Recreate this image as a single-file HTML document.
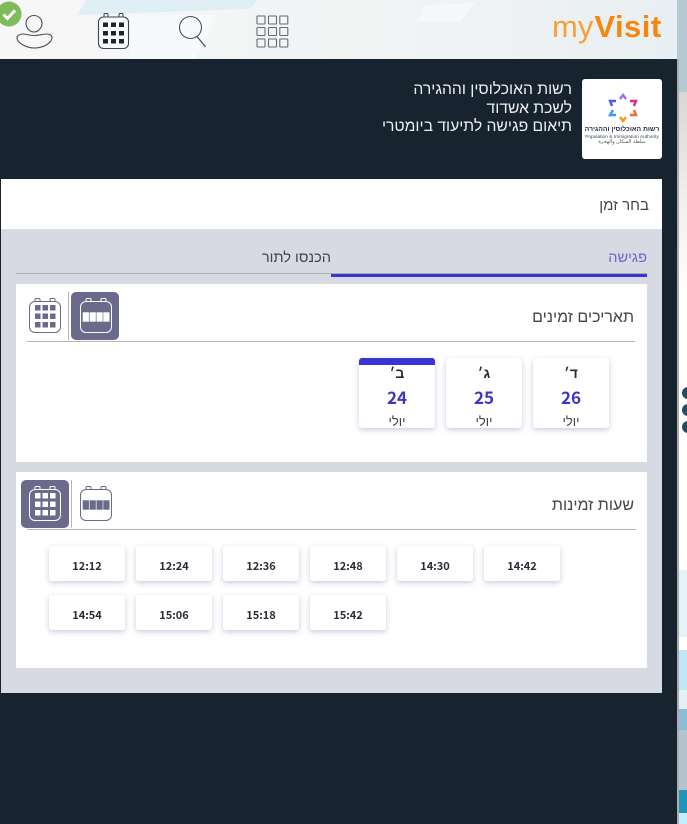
<!DOCTYPE html>
<html lang="he"><head><meta charset="utf-8"><title>myVisit</title>
<style>
html,body{margin:0;padding:0;width:687px;height:824px;overflow:hidden;background:#fff}
body{position:relative;font-family:"Liberation Sans","Noto Sans CJK SC",sans-serif}
.a{position:absolute}
.t{position:absolute;direction:rtl;white-space:nowrap;text-align:right}
.card{position:absolute;background:#fff}
.d{position:absolute;top:358px;width:76px;height:70px;background:#fff;border-radius:3px;box-shadow:0 2px 6px rgba(70,70,140,.28);text-align:center;direction:rtl;overflow:hidden}
.d b{position:absolute;left:0;right:0;top:6px;font-size:14px;line-height:18px;color:#2b2b35}
.d i{position:absolute;left:0;right:0;top:29px;font:bold 17px/20px "Noto Sans CJK SC","Liberation Sans",sans-serif;color:#3d35c9}
.d span{position:absolute;left:0;right:0;top:56px;font-size:13px;line-height:15px;color:#444}
.h{position:absolute;width:76px;height:35px;background:#fff;border-radius:3px;box-shadow:0 2px 6px rgba(70,70,140,.28);text-align:center;font:bold 11px/41px "Noto Sans CJK SC","Liberation Sans",sans-serif;color:#2a2d38}
</style></head>
<body>
<!-- right strip -->
<div class="a" style="left:677px;top:0;width:10px;height:824px;background:linear-gradient(#d8d6d6 92px,#f0f0f0 200px,#fff 300px)"></div>
<div class="a" style="left:677px;top:0;width:10px;height:92px;background:#b5cad3"></div>
<div class="a" style="left:677px;top:570px;width:10px;height:67px;background:#e4f4f8"></div>
<div class="a" style="left:677px;top:650px;width:10px;height:40px;background:#bfe8f4"></div>
<div class="a" style="left:677px;top:690px;width:10px;height:19px;background:#e3f0f6"></div>
<div class="a" style="left:677px;top:709px;width:10px;height:21px;background:#8bbcd6"></div>
<div class="a" style="left:677px;top:730px;width:10px;height:60px;background:#b3c3d0"></div>
<div class="a" style="left:677px;top:790px;width:10px;height:23px;background:#2196bd"></div>
<div class="a" style="left:677px;top:813px;width:10px;height:11px;background:#c0f0fa"></div>
<div class="a" style="left:682px;top:387px;width:12px;height:12px;border-radius:50%;background:#264a5e"></div>
<div class="a" style="left:682px;top:404px;width:12px;height:12px;border-radius:50%;background:#264a5e"></div>
<div class="a" style="left:682px;top:421px;width:12px;height:12px;border-radius:50%;background:#264a5e"></div>

<!-- dark main -->
<div class="a" style="left:0;top:59px;width:677px;height:765px;background:#182330"></div>
<div class="a" style="left:677px;top:59px;width:2px;height:765px;background:#adadad"></div>

<!-- header -->
<div class="a" style="left:0;top:0;width:677px;height:59px;background:linear-gradient(90deg,#f7f7f7,#f1f3f4 60%,#e8eff2)"></div>
<svg class="a" style="left:0;top:0" width="677" height="59" viewBox="0 0 677 59">
<polygon points="86,0 258,0 250,9 77,15" fill="#e0eff6"/>
<polygon points="130,15 218,15 195,59 130,59" fill="#f7fafb"/>
<polygon points="425,5 475,3 460,22 418,22" fill="#f5f7f8"/>
<!-- check -->
<circle cx="9" cy="14" r="12.5" fill="#80bb5b"/>
<path d="M3.500 14.500l4 4 7.500-8" fill="none" stroke="#fff" stroke-width="3"/>
<!-- person -->
<path d="M34 15.500c4.500 0 8 3.500 8 7.500 0 4-3 9-8 9s-8-5-8-9c0-4 3.500-7.500 8-7.500z" fill="none" stroke="#4a4f55" stroke-width="1.100"/>
<path d="M23 34c3 0 6 1.500 11 1.500s9-1.500 13-1.500c3 0 5 1.500 5 3.500 0 5-8 10.500-17.500 10.500S17 42 17 38c0-2.500 3-4 6-4z" fill="none" stroke="#4a4f55" stroke-width="1.100"/>
<!-- calendar -->
<path d="M104 17v-2.500q0-1 1-1h2q1 0 1 1v2.500M119 17v-2.500q0-1 1-1h2q1 0 1 1v2.500" fill="none" stroke="#3a444e" stroke-width="1"/>
<rect x="98.500" y="17" width="30" height="31.500" rx="5" fill="#fbfcfc" stroke="#3a444e" stroke-width="1.100"/>
<g fill="#1a2530">
<rect x="103" y="22.500" width="5" height="4.500"/><rect x="111" y="22.500" width="5" height="4.500"/><rect x="119" y="22.500" width="5" height="4.500"/>
<rect x="103" y="31" width="5" height="4.500"/><rect x="111" y="31" width="5" height="4.500"/><rect x="119" y="31" width="5" height="4.500"/>
<rect x="103" y="39" width="5" height="4.500"/><rect x="111" y="39" width="5" height="4.500"/><rect x="119" y="39" width="5" height="4.500"/>
</g>
<!-- search -->
<circle cx="190.500" cy="27.500" r="11" fill="none" stroke="#4a4f55" stroke-width="1.100"/>
<path d="M197 36.500L205.500 47" stroke="#4a4f55" stroke-width="1.300"/>
<!-- grid -->
<g fill="none" stroke="#666b70" stroke-width="1.100">
<rect x="257" y="16" width="8" height="8" rx=".5"/><rect x="268.500" y="16" width="8" height="8" rx=".5"/><rect x="279.800" y="16" width="8" height="8" rx=".5"/>
<rect x="257" y="27.500" width="8" height="8" rx=".5"/><rect x="268.500" y="27.500" width="8" height="8" rx=".5"/><rect x="279.800" y="27.500" width="8" height="8" rx=".5"/>
<rect x="257" y="39" width="8" height="8" rx=".5"/><rect x="268.500" y="39" width="8" height="8" rx=".5"/><rect x="279.800" y="39" width="8" height="8" rx=".5"/>
</g>
</svg>
<div class="a" style="left:552px;top:5px;font-size:31px;line-height:44px;color:#f7a038;white-space:nowrap">my<b style="color:#f5860f;letter-spacing:.5px;margin-left:1px">Visit</b></div>

<!-- org title -->
<div class="t" style="right:115px;top:81px;font-size:15.700px;line-height:18.500px;color:#eef0f2">רשות האוכלוסין וההגירה<br>לשכת אשדוד<br>תיאום פגישה לתיעוד ביומטרי</div>

<!-- org logo -->
<div class="a" style="left:582px;top:79px;width:80px;height:80px;background:#fff;border-radius:3px;overflow:hidden">
<svg width="80" height="80" viewBox="582 79 80 80" style="position:absolute;left:0;top:0">
<g fill="none" stroke-width="2.400">
<path d="M620 99l3-4 3 4" stroke="#9a6cf0"/>
<path d="M630 101h6l-2 5" stroke="#e8257f"/>
<path d="M634 110l2 5h-6" stroke="#f5683c"/>
<path d="M626 117l-3 4-3-4" stroke="#f59a16"/>
<path d="M616 115h-6l3-5" stroke="#2f9cf5"/>
<path d="M612 106l-2-5h6" stroke="#4a5cf0"/>
</g>
</svg>
<div class="a" style="left:0;right:0;top:46px;text-align:center;direction:rtl;font-size:6.800px;line-height:10px;font-weight:bold;color:#2a2f4a;white-space:nowrap">רשות האוכלוסין וההגירה</div>
<div class="a" style="left:0;right:0;top:54.500px;text-align:center;font-size:4.800px;line-height:7px;color:#3b4470;white-space:nowrap">Population &amp; Immigration Authority</div>
<div class="a" style="left:0;right:0;top:59.500px;text-align:center;direction:rtl;font-family:'DejaVu Sans',sans-serif;font-size:5px;line-height:7px;color:#555;white-space:nowrap">سلطة السكان والهجرة</div>
</div>

<!-- panel -->
<div class="a" style="left:1px;top:179px;width:661px;height:50px;background:#fff"></div>
<div class="a" style="left:1px;top:229px;width:661px;height:464px;background:#d7dae2"></div>
<div class="t" style="right:38px;top:196px;font-size:15px;line-height:20px;color:#444;margin-top:0">בחר זמן</div>

<!-- tabs -->
<div class="t" style="right:40px;top:249px;font-size:14.600px;line-height:18px;color:#6a66cc">פגישה</div>
<div class="t" style="right:356px;top:249px;font-size:14.600px;line-height:18px;color:#444">הכנסו לתור</div>
<div class="a" style="left:16px;top:273px;width:631px;height:1px;background:#adadb2"></div>
<div class="a" style="left:331px;top:274px;width:316px;height:3px;background:#3a35d2"></div>

<!-- svg symbols -->
<svg width="0" height="0" style="position:absolute">
<symbol id="g" viewBox="0 0 32 35">
<path d="M6 3.500V1.500q0-1 1-1h3q1 0 1 1v2M21 3.500V1.500q0-1 1-1h3q1 0 1 1v2" fill="none" stroke="currentColor"/>
<rect x=".5" y="3.500" width="31" height="31" rx="5.500" fill="none" stroke="currentColor"/>
<g fill="currentColor"><rect x="6" y="7" width="5.500" height="5.500"/><rect x="13.500" y="7" width="5.500" height="5.500"/><rect x="21" y="7" width="5.500" height="5.500"/>
<rect x="6" y="15.500" width="5.500" height="5.500"/><rect x="13.500" y="15.500" width="5.500" height="5.500"/><rect x="21" y="15.500" width="5.500" height="5.500"/>
<rect x="6" y="24" width="5.500" height="5.500"/><rect x="13.500" y="24" width="5.500" height="5.500"/><rect x="21" y="24" width="5.500" height="5.500"/></g>
</symbol>
<symbol id="s" viewBox="0 0 32 35">
<path d="M6 3.500V1.500q0-1 1-1h3q1 0 1 1v2M21 3.500V1.500q0-1 1-1h3q1 0 1 1v2" fill="none" stroke="currentColor"/>
<rect x=".5" y="3.500" width="31" height="31" rx="5.500" fill="none" stroke="currentColor"/>
<g fill="currentColor"><rect x="2.700" y="14.300" width="6.200" height="9.400"/><rect x="9.600" y="14.300" width="6.200" height="9.400"/><rect x="16.500" y="14.300" width="6.200" height="9.400"/><rect x="23.300" y="14.300" width="6.200" height="9.400"/></g>
</symbol>
</svg>

<!-- dates card -->
<div class="card" style="left:16px;top:284px;width:631px;height:178px"></div>
<svg class="a" style="left:29px;top:298px;color:#6b6a8c" width="32" height="35"><use href="#g"/></svg>
<div class="a" style="left:68px;top:292px;width:1px;height:48px;background:#b5b5b5"></div>
<div class="a" style="left:71px;top:292px;width:48px;height:48px;background:#6b6a8c;border-radius:5px"></div>
<svg class="a" style="left:80px;top:298px;color:#fff" width="32" height="35"><use href="#s"/></svg>
<div class="a" style="left:27px;top:341px;width:608px;height:1px;background:#b5b5b5"></div>
<div class="t" style="right:53px;top:309px;font-size:16px;line-height:18px;color:#444">תאריכים זמינים</div>

<div class="d" style="left:359px"><div class="a" style="left:0;right:0;top:0;height:7px;background:#3a35d2"></div><b>ב׳</b><i>24</i><span>יולי</span></div>
<div class="d" style="left:446px"><b>ג׳</b><i>25</i><span>יולי</span></div>
<div class="d" style="left:533px"><b>ד׳</b><i>26</i><span>יולי</span></div>

<!-- hours card -->
<div class="card" style="left:16px;top:472px;width:631px;height:196px"></div>
<div class="a" style="left:21px;top:480px;width:48px;height:48px;background:#6b6a8c;border-radius:5px"></div>
<svg class="a" style="left:29px;top:486px;color:#fff" width="32" height="35"><use href="#g"/></svg>
<div class="a" style="left:71px;top:480px;width:1px;height:48px;background:#b5b5b5"></div>
<svg class="a" style="left:80px;top:486px;color:#6b6a8c" width="32" height="35"><use href="#s"/></svg>
<div class="a" style="left:27px;top:529px;width:609px;height:1px;background:#b5b5b5"></div>
<div class="t" style="right:53px;top:497px;font-size:16px;line-height:18px;color:#444">שעות זמינות</div>

<div class="h" style="left:49px;top:546px">12:12</div>
<div class="h" style="left:136px;top:546px">12:24</div>
<div class="h" style="left:223px;top:546px">12:36</div>
<div class="h" style="left:310px;top:546px">12:48</div>
<div class="h" style="left:397px;top:546px">14:30</div>
<div class="h" style="left:484px;top:546px">14:42</div>
<div class="h" style="left:49px;top:595px">14:54</div>
<div class="h" style="left:136px;top:595px">15:06</div>
<div class="h" style="left:223px;top:595px">15:18</div>
<div class="h" style="left:310px;top:595px">15:42</div>
</body></html>
